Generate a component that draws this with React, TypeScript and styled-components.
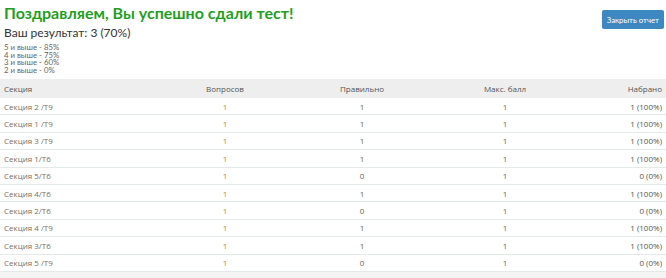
import styled, { createGlobalStyle } from 'styled-components';

const Global = createGlobalStyle`
  html, body { margin: 0; padding: 0; background: #fff; }
  body { font-family: 'Open Sans', 'Liberation Sans', sans-serif; color: #333; }
`;

const Page = styled.div`
  width: 666px;
  overflow: hidden;
`;

const Head = styled.div`
  display: flex;
  justify-content: space-between;
  align-items: flex-start;
  padding: 0 2px 0 4px;
  height: 79px;
`;

const Title = styled.h1`
  margin: 2px 0 0;
  font-family: Lato, 'Open Sans', sans-serif;
  font-size: 16px;
  font-weight: 700;
  line-height: 22px;
  color: #1f9f1f;
`;

const Score = styled.div`
  margin-top: 1px;
  font-family: Lato, 'Open Sans', sans-serif;
  font-size: 12px;
  line-height: 16px;
  color: #333;
`;

const Scale = styled.div`
  margin-top: 3px;
  font-family: Lato, 'Open Sans', sans-serif;
  font-size: 7.8px;
  line-height: 7.6px;
  color: #666;
`;

const CloseBtn = styled.button`
  margin-top: 10px;
  height: 19px;
  padding: 0 5px;
  border: none;
  border-radius: 2px;
  background: #3d88c1;
  color: #fff;
  font-family: Lato, 'Open Sans', sans-serif;
  font-size: 7.8px;
`;

const Table = styled.table`
  width: 100%;
  border-collapse: collapse;
  font-size: 8px;
`;

const Th = styled.th<{ $align: string }>`
  background: #eee;
  height: 19px;
  padding: 0 4px;
  font-weight: 400;
  color: #555;
  text-align: ${p => p.$align};
`;

const Td = styled.td<{ $align: string; $tone?: string }>`
  height: 16.4px;
  padding: 0 4px;
  border-bottom: 1px solid #e3e8e8;
  text-align: ${p => p.$align};
  color: ${p => p.$tone || '#666'};
`;

const Foot = styled.div`
  height: 10px;
  background: #f4f4f4;
`;

const cols = [
  { name: 'Секция', align: 'left', w: '150px' },
  { name: 'Вопросов', align: 'center', w: '150px' },
  { name: 'Правильно', align: 'center', w: '124px' },
  { name: 'Макс. балл', align: 'center', w: '162px' },
  { name: 'Набрано', align: 'right', w: 'auto' },
];

const rows: [string, number][] = [
  ['Секция 2 /Т9', 1],
  ['Секция 1 /Т9', 1],
  ['Секция 3 /Т9', 1],
  ['Секция 1/Т6', 1],
  ['Секция 5/Т6', 0],
  ['Секция 4/Т6', 1],
  ['Секция 2/Т6', 0],
  ['Секция 4 /Т9', 1],
  ['Секция 3/Т6', 1],
  ['Секция 5 /Т9', 0],
];

export default function App() {
  return (
    <Page>
      <Global />
      <Head>
        <div>
          <Title>Поздравляем, Вы успешно сдали тест!</Title>
          <Score>Ваш результат: 3 (70%)</Score>
          <Scale>
            <div>5 и выше - 85%</div>
            <div>4 и выше - 75%</div>
            <div>3 и выше - 60%</div>
            <div>2 и выше - 0%</div>
          </Scale>
        </div>
        <CloseBtn>Закрыть отчет</CloseBtn>
      </Head>
      <Table>
        <colgroup>
          {cols.map(c => <col key={c.name} style={{ width: c.w }} />)}
        </colgroup>
        <thead>
          <tr>
            {cols.map(c => <Th key={c.name} $align={c.align}>{c.name}</Th>)}
          </tr>
        </thead>
        <tbody>
          {rows.map(([name, ok]) => (
            <tr key={name}>
              <Td $align="left" $tone="#7b6f60">{name}</Td>
              <Td $align="center" $tone="#b3863a">1</Td>
              <Td $align="center">{ok}</Td>
              <Td $align="center">1</Td>
              <Td $align="right" $tone="#555">{ok ? '1 (100%)' : '0 (0%)'}</Td>
            </tr>
          ))}
        </tbody>
      </Table>
      <Foot />
    </Page>
  );
}
